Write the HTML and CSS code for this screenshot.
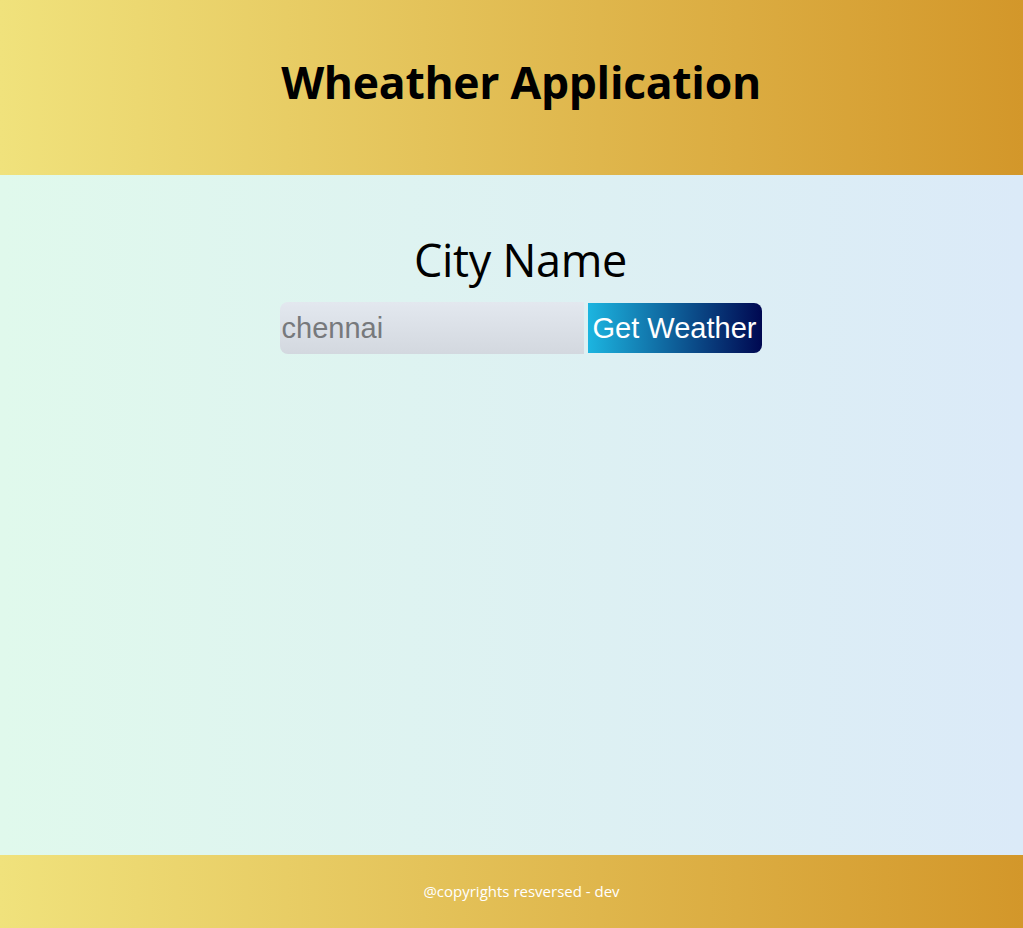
FILE: index.html
```html
<!DOCTYPE html>
<html lang="en">
<head>
<meta charset="utf-8">
<title>Wheather Application</title>
<link rel="stylesheet" href="styles.css">
</head>
<body>
<header class="header">
  <h1 class="title">Wheather Application</h1>
</header>
<main class="main">
  <h2 class="city-label">City Name</h2>
  <form class="search">
    <input class="city-input" type="text" placeholder="chennai">
    <button class="get-btn" type="button">Get Weather</button>
  </form>
</main>
<footer class="footer">
  <p class="copy">@copyrights resversed - dev</p>
</footer>
</body>
</html>
```

FILE: styles.css
```css
* { box-sizing: border-box; }
html, body { margin: 0; padding: 0; }
body {
  font-family: "Open Sans", "Noto Sans", sans-serif;
  color: #000;
}
.header {
  height: 175px;
  background: linear-gradient(to right, #f0e27c, #d3972a);
  display: flex;
  align-items: center;
  justify-content: center;
  padding-left: 19px;
}
.title {
  margin: 0;
  font-size: 44.5px;
  font-weight: 700;
  letter-spacing: -0.3px;
  line-height: 1;
  padding-bottom: 10px;
}
.main {
  height: 680px;
  background: linear-gradient(to right, #e0f9ec, #dbeaf8);
  display: flex;
  flex-direction: column;
  align-items: center;
  padding-top: 56px;
  padding-left: 18px;
}
.city-label {
  margin: 0;
  font-size: 45px;
  font-weight: 400;
  line-height: 58px;
  letter-spacing: -0.3px;
}
.search {
  margin-top: 13px;
  display: flex;
  align-items: center;
  gap: 4px;
}
.city-input {
  width: 304px;
  height: 52px;
  border: none;
  outline: none;
  border-radius: 8px 0 0 8px;
  background: linear-gradient(to bottom, #e3e8ef, #d3d8df);
  font-family: "Liberation Sans", Arial, sans-serif;
  font-size: 29px;
  padding: 0 2px;
  color: #333;
}
.city-input::placeholder { color: #77797c; }
.get-btn {
  height: 50px;
  width: 174px;
  border: none;
  border-radius: 0 8px 8px 0;
  background: linear-gradient(to right, #1cb5e0, #000851);
  color: #fff;
  font-family: "Liberation Sans", Arial, sans-serif;
  font-size: 29px;
  padding: 0 2px;
  white-space: nowrap;
  cursor: pointer;
}
.footer {
  height: 73px;
  background: linear-gradient(to right, #f0e27c, #d3972a);
  display: flex;
  align-items: center;
  justify-content: center;
  padding-left: 20px;
  padding-bottom: 1px;
}
.copy {
  margin: 0;
  color: #fff;
  font-size: 15px;
}
```
